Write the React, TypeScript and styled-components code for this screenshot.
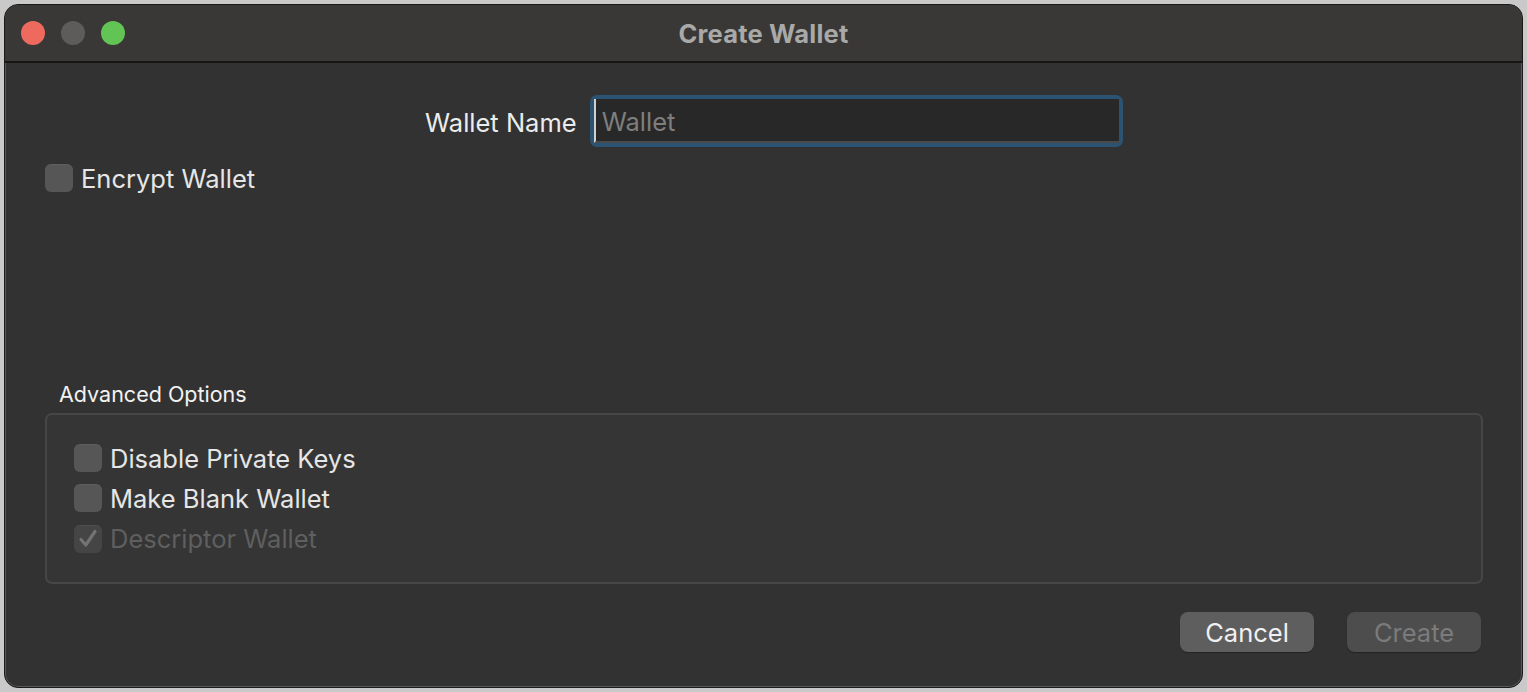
import React, { FC } from 'react';
import styled, { createGlobalStyle } from 'styled-components';

const GlobalStyle = createGlobalStyle`
  html, body {
    margin: 0;
    padding: 0;
    background: #c9c9c9;
    font-family: Inter, "Noto Sans", "Liberation Sans", sans-serif;
  }
  #root {
    height: 692px;
  }
`;

const App: FC = () => {
  return (
    <>
      <GlobalStyle />
      <Screen>
        <Window>
          <TitleBar>
            <Lights>
              <Light color="#ee6a5f" />
              <Light color="#5d5c5b" />
              <Light color="#61c454" />
            </Lights>
            <Title>Create Wallet</Title>
          </TitleBar>
          <Body>
            <NameRow>
              <NameLabel>Wallet Name</NameLabel>
              <FocusRing>
                <NameInput placeholder="Wallet" />
              </FocusRing>
            </NameRow>
            <EncryptRow>
              <Check label="Encrypt Wallet" />
            </EncryptRow>
            <Spacer />
            <GroupTitle>Advanced Options</GroupTitle>
            <GroupBox>
              <Check label="Disable Private Keys" />
              <Check label="Make Blank Wallet" />
              <Check label="Descriptor Wallet" checked disabled />
            </GroupBox>
            <Buttons>
              <Button>Cancel</Button>
              <Button disabled>Create</Button>
            </Buttons>
          </Body>
        </Window>
      </Screen>
    </>
  );
};

const Check: FC<{ label: string; checked?: boolean; disabled?: boolean }> = ({
  label,
  checked,
  disabled,
}) => (
  <CheckRow $disabled={disabled}>
    <Box $disabled={disabled}>
      {checked && (
        <svg width="22" height="22" viewBox="0 0 22 22">
          <path
            d="M4 11.5 L8.8 17 L18 3.5"
            fill="none"
            stroke="#737373"
            strokeWidth="3.2"
            strokeLinecap="round"
            strokeLinejoin="round"
          />
        </svg>
      )}
    </Box>
    <CheckText>{label}</CheckText>
  </CheckRow>
);

export default App;

const Screen = styled.div`
  padding: 4px;
  height: 684px;
`;

const Window = styled.div`
  width: 1519px;
  height: 684px;
  box-sizing: border-box;
  border: 1px solid #1a1a1a;
  border-radius: 14px;
  overflow: hidden;
  background: #323232;
  display: flex;
  flex-direction: column;
  box-shadow: inset 0 0 0 1px #5a5a5a;
`;

const TitleBar = styled.div`
  position: relative;
  height: 56px;
  flex: none;
  background: #393837;
  border-bottom: 2px solid #161616;
  display: flex;
  align-items: center;
  justify-content: center;
`;

const Lights = styled.div`
  position: absolute;
  left: 16px;
  top: 16px;
  display: flex;
  gap: 16px;
`;

const Light = styled.span<{ color: string }>`
  width: 24px;
  height: 24px;
  border-radius: 50%;
  background: ${(p) => p.color};
`;

const Title = styled.div`
  color: #a9a9a8;
  font-size: 25.5px;
  font-weight: 700;
  letter-spacing: 0.2px;
`;

const Body = styled.div`
  flex: 1;
  display: flex;
  flex-direction: column;
  padding: 32px 39px 35px 40px;
`;

const NameRow = styled.div`
  display: flex;
  align-items: center;
  gap: 13px;
  padding-left: 380px;
`;

const NameLabel = styled.div`
  color: #ececec;
  font-size: 25.5px;
  padding-top: 2px;
`;

const FocusRing = styled.div`
  width: 533px;
  height: 52px;
  box-sizing: border-box;
  padding: 4px;
  border-radius: 7px;
  background: #2c5372;
`;

const NameInput = styled.input`
  width: 100%;
  height: 100%;
  box-sizing: border-box;
  border: none;
  border-bottom: 2px solid #4a4a4a;
  border-left: 2px solid #d0d0d0;
  background: #282828;
  outline: none;
  padding: 3px 6px 0;
  font-family: inherit;
  font-size: 25.5px;
  color: #e0e0e0;

  &::placeholder {
    color: #7e7e7e;
  }
`;

const EncryptRow = styled.div`
  margin-top: 10px;
`;

const CheckRow = styled.div<{ $disabled?: boolean }>`
  display: flex;
  align-items: center;
  gap: 8px;
  height: 42px;
  color: ${(p) => (p.$disabled ? '#5f5f5f' : '#e6e6e6')};
`;

const Box = styled.div<{ $disabled?: boolean }>`
  width: 28px;
  height: 28px;
  box-sizing: border-box;
  border-radius: 6px;
  background: ${(p) => (p.$disabled ? '#454545' : '#565656')};
  box-shadow: inset 0 1px 0 rgba(255, 255, 255, 0.06);
  display: flex;
  align-items: center;
  justify-content: center;
`;

const CheckText = styled.span`
  font-size: 25.5px;
`;

const Spacer = styled.div`
  flex: 1;
`;

const GroupTitle = styled.div`
  color: #f2f2f2;
  font-size: 21.5px;
  margin: 0 0 6px 14px;
`;

const GroupBox = styled.div`
  height: 171px;
  box-sizing: border-box;
  border: 2px solid #474747;
  border-radius: 7px;
  background: #353535;
  padding: 23px 27px;
  display: flex;
  flex-direction: column;
`;

const Buttons = styled.div`
  display: flex;
  justify-content: flex-end;
  gap: 33px;
  margin-top: 28px;
  padding-right: 2px;
`;

const Button = styled.button`
  width: 134px;
  height: 40px;
  border: none;
  border-radius: 8px;
  font-family: inherit;
  font-size: 25.5px;
  background: ${(p) => (p.disabled ? '#4d4d4d' : '#5e5e5e')};
  color: ${(p) => (p.disabled ? '#7b7b7b' : '#f0f0f0')};
  box-shadow: 0 1px 1px rgba(0, 0, 0, 0.3);
  padding: 0;
`;
